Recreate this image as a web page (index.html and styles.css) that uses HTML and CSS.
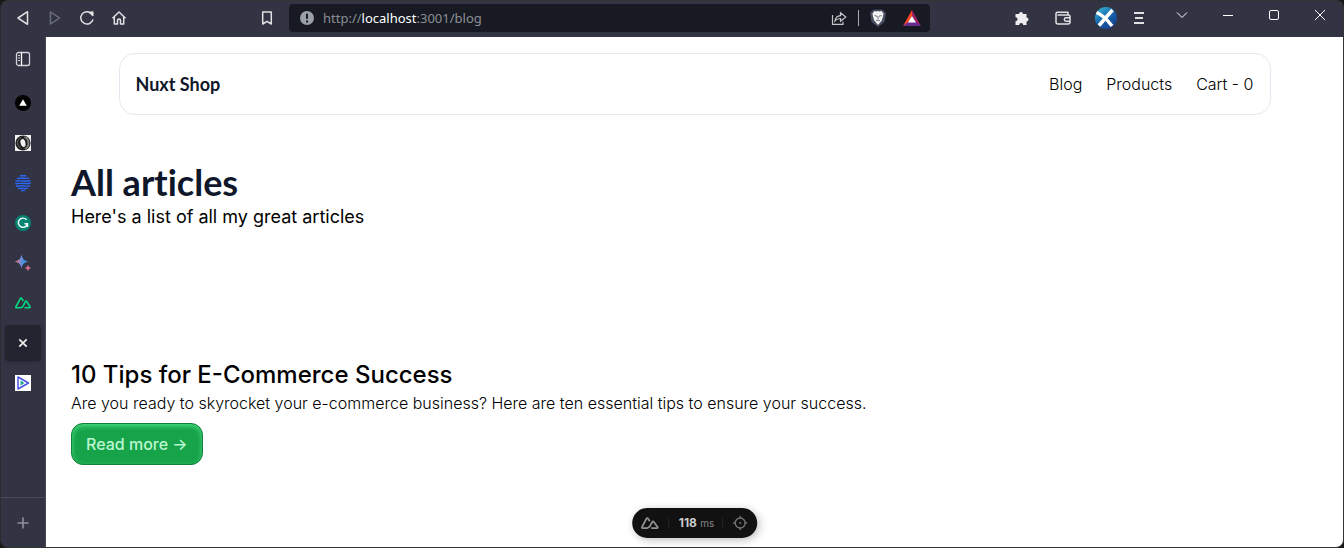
FILE: index.html
```
<!DOCTYPE html>
<html lang="en">
<head>
<meta charset="utf-8">
<meta name="viewport" content="width=device-width, initial-scale=1">
<title>Nuxt Shop</title>
<link rel="stylesheet" href="styles.css">
</head>
<body>
<div class="window">
  <header class="toolbar">
    <div class="tool-group">
      <button class="tool" aria-label="Back"><svg width="16" height="16" viewBox="0 0 16 16"><path d="M12.500 1.700v12.600L3 8z"/></svg></button>
      <button class="tool dim" aria-label="Forward"><svg width="16" height="16" viewBox="0 0 16 16"><path d="M3.500 2v12L12.500 8z"/></svg></button>
      <button class="tool" aria-label="Reload"><svg width="16" height="16" viewBox="0 0 16 16"><path d="M12.600 3.700A6.200 6.200 0 1 0 14 9.400"/><path d="M10.500 2.500 13.800 2v3.400z" fill="currentColor"/></svg></button>
      <button class="tool" aria-label="Home"><svg width="16" height="16" viewBox="0 0 16 16"><path d="M1.500 8.200 8 2l6.500 6.200M3.300 7v7h3.200v-3.500a1.500 1.500 0 0 1 3 0V14h3.200V7"/></svg></button>
    </div>
    <button class="tool bookmark" aria-label="Bookmark"><svg width="16" height="16" viewBox="0 0 16 16"><path d="M3.700 2h8.600v12L8 11.300 3.700 14z"/></svg></button>
    <div class="address">
      <svg class="info" width="16" height="16" viewBox="0 0 16 16"><circle cx="8" cy="8" r="7" fill="#9b9fa8"/><path d="M8 3.800v5M8 10.500v2" stroke="#171a22" stroke-width="2"/></svg>
      <span class="url"><span>http://</span><span class="host">localhost</span><span>:3001/blog</span></span>
      <button class="share" aria-label="Share"><svg width="16" height="16" viewBox="0 0 16 16"><path d="M1.500 5v9.300H12v-2.500M4 11c.4-3.700 2.500-5.200 5.500-5.400V2.700l5.300 4.300-5.300 4.200V8.500C7 8.500 5.500 9 4 11z"/></svg></button>
      <span class="divider"></span>
      <button class="shield" aria-label="Shields"><svg width="16" height="18" viewBox="0 0 16 18"><path d="M3.500.5h9L16 4l-1.500 9L8 18l-6.500-5L0 4z" fill="#484c60"/><path d="m4.600 2 2 .5L8 2l1.400.5 2-.5 2.100 2.400-.5 3.200-1.200 4L8 16l-3.800-4.400L3 7.600l-.5-3.200z" fill="#f2f2f2"/><path d="m4.500 6.500 2.500.8M11.500 6.500 9 7.300M8 7v3M6 12l2-1 2 1" stroke="#6a6d7d" stroke-width="1"/></svg></button>
      <button class="rewards" aria-label="Rewards"><svg width="18" height="16" viewBox="0 0 18 16"><path d="M9 0v6l-4 7-5 3z" fill="#ff4724"/><path d="M9 0v6l4 7 5 3z" fill="#9e1f63"/><path d="m0 16 5-4h8l5 4z" fill="#662d91"/><path d="m9 6 4 6.500H5z" fill="#fff"/></svg></button>
    </div>
    <div class="extensions">
      <button class="tool" aria-label="Extensions"><svg width="16" height="16" viewBox="0 0 16 16"><path fill="#eee" stroke="none" d="M1.500 4H5a2 2 0 1 1 4 0h3.500v3.500a2 2 0 1 1 0 4V15H9.200a2 2 0 0 0-4 0H1.500v-3.700a2 2 0 0 0 0-4z"/></svg></button>
      <button class="tool" aria-label="Wallet"><svg width="16" height="16" viewBox="0 0 16 16"><path d="M1 3.500V12a2 2 0 0 0 2 2h10a2 2 0 0 0 2-2V7a2 2 0 0 0-2-2H2.500M1 3.500A1.500 1.500 0 0 1 2.500 2.200H13V5M15 7.800h-4a1.700 1.700 0 0 0 0 3.400h4"/></svg></button>
      <button class="tool" aria-label="Extension"><svg width="22" height="22" viewBox="0 0 22 22"><defs><linearGradient id="blue" x2="0.7" y2="1"><stop stop-color="#3fc4dc"/><stop offset=".55" stop-color="#1565ad"/><stop offset="1" stop-color="#173f90"/></linearGradient></defs><circle cx="11" cy="11" r="11" fill="url(#blue)" stroke="none"/><path d="M1.500 5.500c5 2 10 6 15.500 13.500M17.500 3 4 18.500" stroke="#fff" stroke-width="3.500"/></svg></button>
      <button class="tool menu" aria-label="Menu"><svg width="12" height="14" viewBox="0 0 12 14"><path d="M1 2h10M2 7h8M1 12h10" stroke-width="1.800"/></svg></button>
    </div>
    <div class="controls">
      <button class="tool" aria-label="Tab search"><svg width="12" height="12" viewBox="0 0 12 12"><path d="m1 3.500 5 5 5-5"/></svg></button>
      <button class="tool" aria-label="Minimize"><svg width="12" height="12" viewBox="0 0 12 12"><path d="M1 6.500h10"/></svg></button>
      <button class="tool" aria-label="Maximize"><svg width="12" height="12" viewBox="0 0 12 12"><rect x="1.500" y="1.500" width="9" height="9" rx="1.500"/></svg></button>
      <button class="tool" aria-label="Close"><svg width="12" height="12" viewBox="0 0 12 12"><path d="m1 1 10 10M11 1 1 11"/></svg></button>
    </div>
  </header>
  <div class="body">
    <aside class="tabs">
      <button class="tab panel" aria-label="Toggle sidebar"><svg width="16" height="16" viewBox="0 0 16 16"><rect x="1.500" y="1.500" width="13" height="13" rx="2" fill="none" stroke="#d0d2d8" stroke-width="1.300"/><path d="M6.500 1.500v13" stroke="#fff" stroke-width="1.300"/><path d="M3 4.500h2M3 7h2M3 9.500h2" stroke="#d0d2d8"/></svg></button>
      <button class="tab" aria-label="Vercel"><svg width="16" height="16" viewBox="0 0 16 16"><circle cx="8" cy="8" r="8" fill="#000"/><path d="m8 4.200 3.800 6.600H4.200z" fill="#fff"/></svg></button>
      <button class="tab" aria-label="JSON"><svg width="16" height="16" viewBox="0 0 16 16"><path fill="#f2f2f2" d="M0 0h16v16H0z"/><circle cx="8" cy="8" r="7.600" fill="#222"/><path d="M9.500 2C14.500 4 15 11 10 14" fill="none" stroke="#858585" stroke-width="1.800"/><path d="M5.500 13C1 10 2 4 6 2.500" fill="none" stroke="#666"/><ellipse cx="8" cy="8" rx="2.400" ry="4" transform="rotate(-15 8 8)" fill="#f2f2f2"/></svg></button>
      <button class="tab" aria-label="Striped circle"><svg width="16" height="16" viewBox="0 0 16 16"><path d="M5 .7h6M2 3.500c4-.8 8 .2 12-.2M.5 6c5-.5 10 .3 15 0M0 8.700c5-.8 11 .3 16-.3M1 11.200c5-.5 9 .2 14-.2M3 13.500c3-.4 7 .2 10-.1M6 15.500h4" fill="none" stroke="#2b66f6" stroke-width="1.400"/></svg></button>
      <button class="tab" aria-label="Grammarly"><svg width="16" height="16" viewBox="0 0 16 16"><circle cx="8" cy="8" r="8" fill="#038371"/><path d="M11.500 4.700a4.600 4.600 0 1 0 1 4H9.500M12.500 8.700V12" fill="none" stroke="#fff" stroke-width="1.400"/></svg></button>
      <button class="tab" aria-label="Bard"><svg width="16" height="16" viewBox="0 0 16 16"><defs><linearGradient id="spark"><stop offset="0" stop-color="#f07868"/><stop offset=".45" stop-color="#7888d6"/><stop offset=".75" stop-color="#3098e8"/><stop offset="1" stop-color="#a176c4"/></linearGradient></defs><path d="M6.500-.3C7.700 4 9 5.500 13.300 6.500 9 7.700 7.700 9 6.500 13.300 5.300 9 4 7.700-.3 6.500 4 5.300 5.300 4 6.500-.3z" fill="url(#spark)"/><path d="M13 9.700c.7 2.200 1.100 2.700 3.200 3.300-2.100.7-2.500 1.200-3.200 3.300-.7-2.100-1.100-2.600-3.300-3.300 2.200-.6 2.600-1.100 3.300-3.300z" fill="#d97092"/></svg></button>
      <button class="tab" aria-label="Nuxt"><svg width="16" height="16" viewBox="0 0 16 16"><path d="M6 12.800H1.500Q.4 12.800 1 11.500L5.200 3.800Q6.100 2.400 7 3.800L8.300 6M5.500 12.800c1.500 0 2-.7 2.700-2L10.400 6.500Q11 5.500 11.700 6.500l3.200 5q.5 1.300-.8 1.300H9.500" fill="none" stroke="#00dc82" stroke-width="1.600"/></svg></button>
      <button class="tab active" aria-label="Close tab"><svg width="16" height="16" viewBox="0 0 16 16"><path d="m4.300 4.300 7.400 7.400M11.700 4.300l-7.400 7.400" stroke="#eee" stroke-width="1.700"/></svg></button>
      <button class="tab" aria-label="Player"><svg width="16" height="16" viewBox="0 0 16 16"><path fill="#fff" d="M0 0h16v16H0z"/><path d="M3 2v12l10.500-6z" fill="#fff" stroke="#4b52e5" stroke-width="1.500" stroke-linejoin="round"/><path d="M5.500 5.300v5.400L9.500 8z" fill="#25a99a"/></svg></button>
      <button class="tab add" aria-label="New tab"><svg width="12" height="12" viewBox="0 0 12 12"><path d="M6 .5v11M.5 6h11" stroke="#8e919b" stroke-width="1.600"/></svg></button>
    </aside>
    <main class="page">
      <nav class="nav">
        <a class="brand" href="#">Nuxt Shop</a>
        <div class="links"><a href="#">Blog</a><a href="#">Products</a><a href="#">Cart - 0</a></div>
      </nav>
      <div class="content">
        <h1>All articles</h1>
        <p class="lead">Here's a list of all my great articles</p>
        <article class="article">
          <h2>10 Tips for E-Commerce Success</h2>
          <p>Are you ready to skyrocket your e-commerce business? Here are ten essential tips to ensure your success.</p>
          <a class="more" href="#">Read more →</a>
        </article>
      </div>
      <div class="devtools">
        <button aria-label="Nuxt DevTools"><svg width="20" height="16" viewBox="0 0 20 16"><path d="M7.500 13.200H2.500Q1.200 13.200 2 11.700L6.200 3.800q.9-1.300 1.800 0l1.500 2.500M6.500 13.200c2 0 2.600-1 3.500-2.500l2-3.700q.8-1.200 1.600 0l3.800 4.900q.5 1.300-.8 1.300H11" stroke="#929292" stroke-width="1.700"/></svg></button>
        <span class="time"><b>118</b> <small>ms</small></span>
        <button aria-label="Inspect"><svg width="16" height="16" viewBox="0 0 16 16"><circle cx="8" cy="8" r="5" stroke="#737373" stroke-width="1.400"/><circle cx="8" cy="8" r="1" fill="#737373"/><path d="M8 1v2.500M8 12.500V15M1 8h2.500M12.500 8H15" stroke="#737373" stroke-width="1.400"/></svg></button>
      </div>
    </main>
  </div>
</div>
</body>
</html>
```
FILE: styles.css
```
* { box-sizing: border-box; }
body { margin: 0; background: #171717; font-family: Inter, "Liberation Sans", sans-serif; }
button { padding: 0; border: 0; background: none; color: inherit; font: inherit; display: flex; align-items: center; justify-content: center; }
svg { display: block; fill: none; overflow: visible; }
a { color: inherit; text-decoration: none; }
h1, h2, p { margin: 0; }

.window { min-height: 100vh; display: flex; flex-direction: column; background: #323443; border: 1px solid #333; border-left-color: #2c2c32; border-radius: 8px; overflow: hidden; }
.toolbar { display: flex; height: 36px; padding-left: 6px; color: #e1e1e4; }
.tool-group, .extensions, .controls { display: flex; }
.tool { width: 32px; height: 34px; }
.tool svg { stroke: currentColor; stroke-width: 1.5px; stroke-linejoin: round; }
.dim { color: #6b6e7b; }
.bookmark { margin: 0 6px 0 116px; }
.address { flex: 1; display: flex; align-items: center; height: 28px; margin-top: 3px; padding: 0 9px 0 10px; background: #171a22; border-radius: 4px; color: #8c8f96; }
.url { flex: 1; margin-left: 8px; font: 13px/20px "Noto Sans", sans-serif; }
.host { color: #fff; }
.share svg { stroke: #c5c5c8; stroke-width: 1.2px; }
.divider { width: 1px; height: 16px; margin: 0 11px; background: #aaa; }
.rewards { margin-left: 17px; }
.extensions { margin-left: 71px; }
.extensions .tool { width: 41px; }
.extensions .tool + .tool + .tool { width: 46px; }
.extensions .menu.tool.tool { width: 20px; }
.controls { margin-left: 10px; }
.controls .tool { width: 46px; height: 28px; color: #fff; }
.controls svg { stroke-width: 1px; }

.body { flex: 1; display: flex; }
.tabs { width: 45px; display: flex; flex-direction: column; border-right: 1px solid #464855; }
.tab { height: 40px; }
.panel { height: 44px; margin-bottom: 2px; }
.active { height: 36px; margin: 2px 4px; background: #22242f; border-radius: 4px; box-shadow: 0 1px 3px #262835; }
.add { height: 50px; margin-top: auto; border-top: 1px solid #484a58; }

.page { flex: 1; position: relative; padding: 16px 24px; background: #fff; color: #000; }
.nav { display: flex; align-items: center; justify-content: space-between; max-width: 1152px; height: 62px; margin: 0 auto; padding: 0 16px; border: 1px solid #e2e8f0; border-radius: 16px; }
.brand { color: #0f172a; font: 700 18px/28px Lato, sans-serif; }
.links { display: flex; gap: 24px; font-size: 16px; line-height: 24px; font-weight: 300; }
.content { padding: 48px 1px; }
h1 { color: #0f172a; font: 700 36px/38px Lato, sans-serif; font-variant-ligatures: none; padding-bottom: 2px; }
.lead { font-size: 18px; line-height: 28px; }
.article { margin-top: 128px; }
h2 { font-size: 24px; line-height: 32px; font-weight: 500; }
.article p { font-size: 16px; line-height: 24px; font-weight: 300; }
.more { display: inline-block; margin-top: 8px; padding: 8px 14px; border: 1px solid #15803d; border-radius: 12px; background: #16a34a; box-shadow: inset 0 2px 5px #4ade80; color: #bbf7d0; font-size: 16px; line-height: 24px; font-weight: 500; }
.devtools { position: absolute; left: 50%; bottom: 9px; transform: translateX(-50%); display: flex; align-items: center; height: 30px; padding: 0 9px 0 8px; border-radius: 15px; background: #111; box-shadow: 2px 2px 8px #0004; color: #ccc; }
.time { margin: 0 9px 0 8px; padding: 0 8px 0 10px; border: solid #262626; border-width: 0 1px; font-size: 12px; line-height: 10px; white-space: nowrap; }
.time small { color: #888; font-size: 10px; }
```
